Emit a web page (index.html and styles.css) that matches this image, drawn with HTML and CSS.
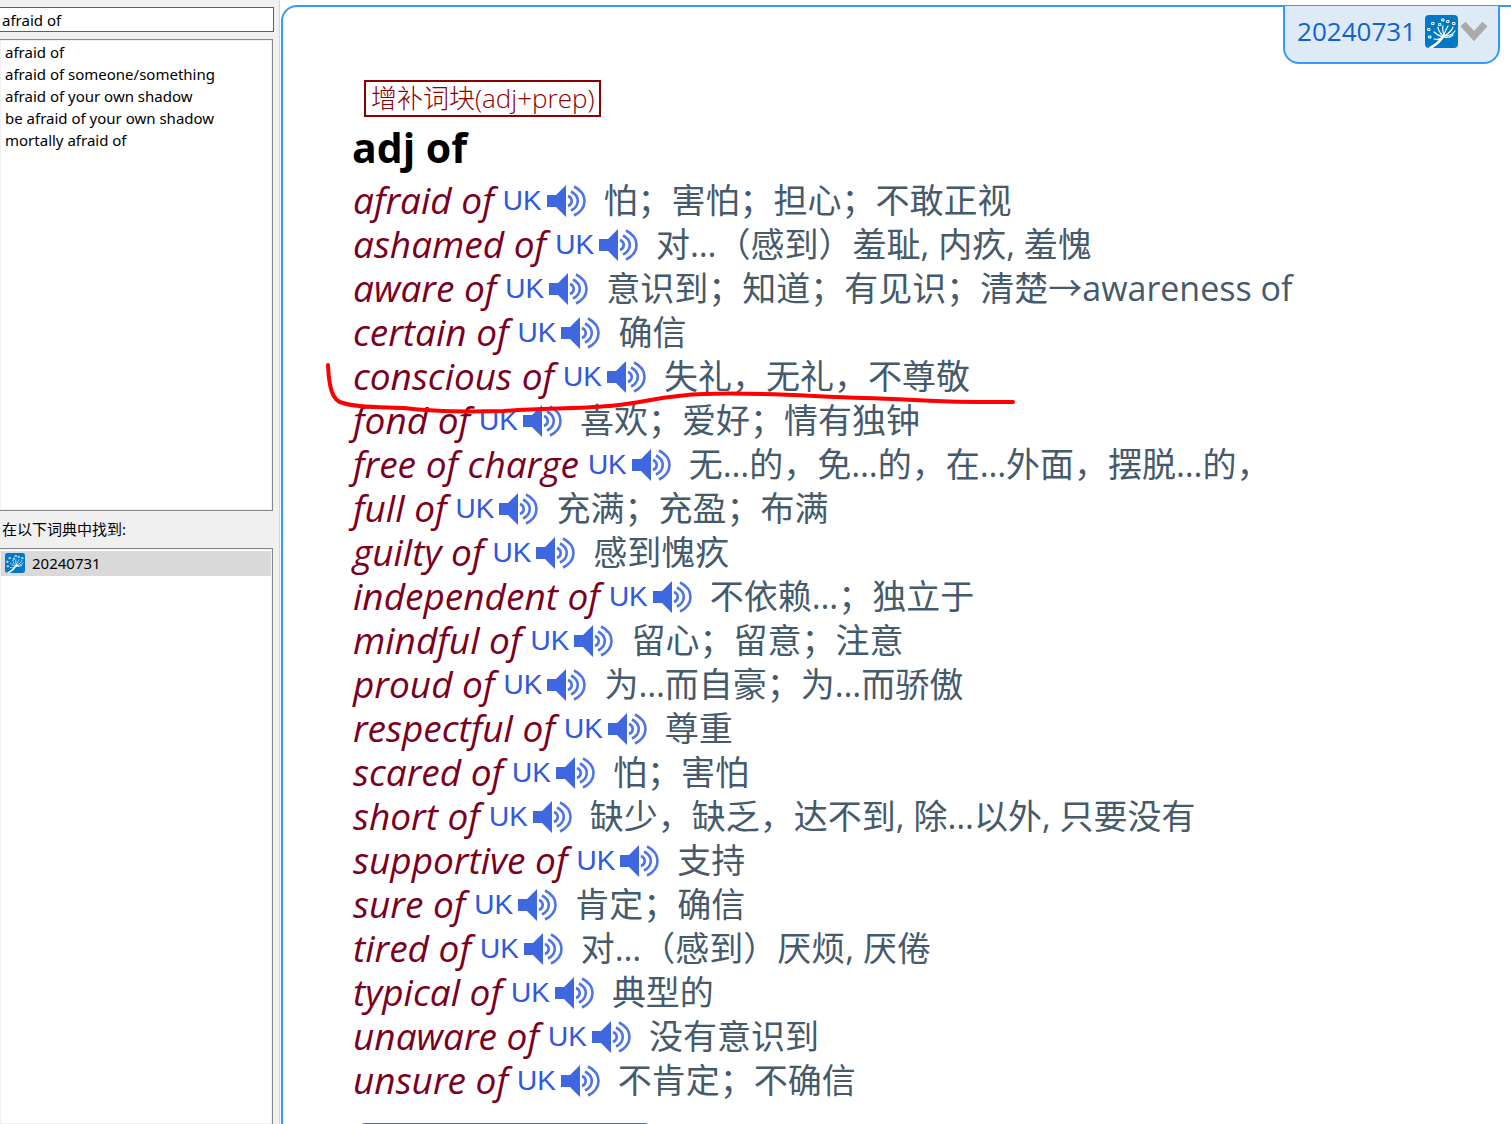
FILE: index.html
```html
<!DOCTYPE html>
<html lang="zh-CN">
<head>
  <meta charset="UTF-8" />
  <meta name="viewport" content="width=device-width, initial-scale=1.0" />
  <title>afraid of</title>
  <link rel="stylesheet" href="styles.css">
</head>
<body>
  <!-- shared icons -->
  <svg class="defs" width="0" height="0" aria-hidden="true">
    <symbol id="speaker" viewBox="0 0 40 34">
      <path d="M0 11h9L19 1v32L9 23H0z" fill="#3f68e0"/>
      <g fill="none" stroke="#4f75e4" stroke-width="2.600">
        <path d="M21 12c5 2 5 8 0 10"/>
        <path d="M24 7.500c9 4.500 9 14.500 0 19"/>
        <path d="M27 2.500c14 7 14 22 0 29"/>
      </g>
    </symbol>
    <symbol id="dict" viewBox="0 0 33 33">
      <rect width="33" height="33" rx="4" fill="#0078c4"/>
      <g fill="none" stroke="#fff" stroke-linecap="round">
        <path d="M5 33c6-3 11-8 14-13" stroke-width="2.500"/>
        <path d="M18 22c-4 3-6 3-9 2M18 22c-4-1-7-3-9-5M18 21c-3-3-5-6-5-9M19 20c-1-3-2-6-1-9M19 20c1-4 3-7 4-9M19 21c4-2 8-6 9-9M19 21c5 0 9-2 11-5M18 22c5 1 8 0 10-2" stroke-width="1.200"/>
        <path d="M7 7.500h2v2H7zM17 4h2v2h-2zM3 13.500h2v2H3zM4 21h2v2H4zM14 8.500h2v2h-2zM22 5.500h2v2h-2zM28 7.500h2v2h-2z" stroke-width="1"/>
      </g>
    </symbol>
  </svg>

  <div class="app">
    <aside class="sidebar">
      <input class="search" type="text" value="afraid of" aria-label="查询" autofocus>
      <ul class="panel matches">
        <li>afraid of</li>
        <li>afraid of someone/something</li>
        <li>afraid of your own shadow</li>
        <li>be afraid of your own shadow</li>
        <li>mortally afraid of</li>
      </ul>
      <h2 class="found">在以下词典中找到:</h2>
      <ul class="panel dicts">
        <li class="selected"><svg class="dict-small"><use href="#dict"/></svg>20240731</li>
      </ul>
    </aside>

    <main class="article">
      <button class="dict-tab" type="button">
        <span>20240731</span>
        <svg class="dict-big"><use href="#dict"/></svg>
        <svg class="chevron" viewBox="0 0 28 20"><path d="M3 3l11 12L25 3" fill="none" stroke="#aaa" stroke-width="7"/></svg>
      </button>

      <div class="tag">增补词块(adj+prep)</div>
      <h1>adj of</h1>
      <ul class="entries">
        <li><i>afraid of</i><button class="uk" type="button">UK<svg><use href="#speaker"/></svg></button><span>怕；害怕；担心；不敢正视</span></li>
        <li><i>ashamed of</i><button class="uk" type="button">UK<svg><use href="#speaker"/></svg></button><span>对…（感到）羞耻, 内疚, 羞愧</span></li>
        <li><i>aware of</i><button class="uk" type="button">UK<svg><use href="#speaker"/></svg></button><span>意识到；知道；有见识；清楚→awareness of</span></li>
        <li><i>certain of</i><button class="uk" type="button">UK<svg><use href="#speaker"/></svg></button><span>确信</span></li>
        <li class="marked"><i>conscious of</i><button class="uk" type="button">UK<svg><use href="#speaker"/></svg></button><span>失礼，无礼，不尊敬</span>
          <svg class="pen" viewBox="0 0 692 56"><path d="M4 6C5 28 8 42 19 44C34 49 60 48 80 49C110 53 140 53 180 52C220 49 250 50 285 47C320 44 340 36 380 35C430 33 480 37 540 39C590 40 620 44 689 43"/></svg>
        </li>
        <li><i>fond of</i><button class="uk" type="button">UK<svg><use href="#speaker"/></svg></button><span>喜欢；爱好；情有独钟</span></li>
        <li><i>free of charge</i><button class="uk" type="button">UK<svg><use href="#speaker"/></svg></button><span>无…的，免…的，在…外面，摆脱…的，</span></li>
        <li><i>full of</i><button class="uk" type="button">UK<svg><use href="#speaker"/></svg></button><span>充满；充盈；布满</span></li>
        <li><i>guilty of</i><button class="uk" type="button">UK<svg><use href="#speaker"/></svg></button><span>感到愧疚</span></li>
        <li><i>independent of</i><button class="uk" type="button">UK<svg><use href="#speaker"/></svg></button><span>不依赖…；独立于</span></li>
        <li><i>mindful of</i><button class="uk" type="button">UK<svg><use href="#speaker"/></svg></button><span>留心；留意；注意</span></li>
        <li><i>proud of</i><button class="uk" type="button">UK<svg><use href="#speaker"/></svg></button><span>为…而自豪；为…而骄傲</span></li>
        <li><i>respectful of</i><button class="uk" type="button">UK<svg><use href="#speaker"/></svg></button><span>尊重</span></li>
        <li><i>scared of</i><button class="uk" type="button">UK<svg><use href="#speaker"/></svg></button><span>怕；害怕</span></li>
        <li><i>short of</i><button class="uk" type="button">UK<svg><use href="#speaker"/></svg></button><span>缺少，缺乏，达不到, 除…以外, 只要没有</span></li>
        <li><i>supportive of</i><button class="uk" type="button">UK<svg><use href="#speaker"/></svg></button><span>支持</span></li>
        <li><i>sure of</i><button class="uk" type="button">UK<svg><use href="#speaker"/></svg></button><span>肯定；确信</span></li>
        <li><i>tired of</i><button class="uk" type="button">UK<svg><use href="#speaker"/></svg></button><span>对…（感到）厌烦, 厌倦</span></li>
        <li><i>typical of</i><button class="uk" type="button">UK<svg><use href="#speaker"/></svg></button><span>典型的</span></li>
        <li><i>unaware of</i><button class="uk" type="button">UK<svg><use href="#speaker"/></svg></button><span>没有意识到</span></li>
        <li><i>unsure of</i><button class="uk" type="button">UK<svg><use href="#speaker"/></svg></button><span>不肯定；不确信</span></li>
      </ul>
      <div class="next-box"></div>
    </main>
  </div>
</body>
</html>
```
FILE: styles.css
```css
* {
  box-sizing: border-box;
}
body {
  margin: 0;
  font-family: "Open Sans", "Noto Sans CJK SC", sans-serif;
  background: #fff;
  color: #000;
}
ul {
  list-style: none;
  margin: 0;
  padding: 0;
}
button {
  font: inherit;
  border: none;
  background: none;
  padding: 0;
  cursor: pointer;
}
.defs {
  position: absolute;
}
.app {
  display: flex;
  height: 100vh;
  overflow: hidden;
}

/* left column */
.sidebar {
  display: flex;
  flex-direction: column;
  flex: none;
  width: 280px;
  padding: 7px 5px 0 0;
  background: #f0f0f0;
  border-right: 1px solid #d4d4d4;
  font-family: "Noto Sans", "Noto Sans CJK SC", sans-serif;
  font-size: 15px;
}
.search {
  height: 25px;
  padding: 0 2px;
  border: 1px solid #0078d7;
  border-left: none;
  background: #fff;
  color: #000;
  font: inherit;
  outline: none;
}
.panel {
  margin-right: 1px;
  border: 1px solid #828790;
  border-left: none;
  background: #fff;
  box-shadow: inset 0 0 0 1px #f0f0f0;
}
.matches {
  height: 42vh;
  margin-top: 7px;
  padding: 1px 0 0 5px;
}
.matches li {
  line-height: 22px;
}
.found {
  margin: 0;
  padding-left: 2px;
  font-size: 15px;
  font-weight: normal;
  line-height: 37px;
}
.dicts {
  flex: 1;
  padding: 2px 1px;
  border-bottom: none;
}
.dicts .selected {
  display: flex;
  align-items: center;
  gap: 7px;
  height: 25px;
  padding: 0 0 2px 4px;
  background: #d9d9d9;
}
.dict-small {
  width: 20px;
  height: 20px;
}

/* article */
.article {
  position: relative;
  flex: 1;
  min-width: 0;
  margin: 5px 0 0 1px;
  padding: 73px 0 0 69px;
  border: 2px solid #39f;
  border-right: none;
  border-bottom: none;
  border-top-left-radius: 16px;
}
.dict-tab {
  position: absolute;
  top: -1px;
  right: 11px;
  display: flex;
  align-items: center;
  height: 58px;
  padding: 0 10px 6px 12px;
  border: 2px solid #39f;
  border-top: none;
  border-radius: 0 0 16px 16px;
  background: #deebf7;
  color: #0f62d0;
  font-size: 26px;
}
.dict-big {
  width: 33px;
  height: 33px;
  margin-left: 9px;
}
.chevron {
  width: 28px;
  height: 20px;
  margin-left: 2px;
}
.tag {
  width: fit-content;
  margin-left: 12px;
  padding: 0 5px;
  border: 2px solid #8b0000;
  color: #8b0000;
  font-size: 26px;
  font-weight: 300;
  line-height: 33px;
}
h1 {
  margin: 0 0 1px;
  font-size: 41px;
  line-height: 60px;
}
.entries {
  color: #455a6b;
  font-size: 34px;
  line-height: 44px;
}
.entries li {
  display: flex;
  align-items: center;
  height: 44px;
  padding-left: 1px;
  white-space: nowrap;
}
.entries i {
  color: #7b0020;
  font-size: 37px;
}
.uk {
  display: flex;
  align-items: center;
  margin: 0 17px 0 9px;
  padding-top: 2px;
  color: #3058e0;
  font-family: "Liberation Sans", sans-serif;
  font-size: 28px;
}
.uk svg {
  width: 40px;
  height: 34px;
  margin-left: 5px;
}
.marked {
  position: relative;
}
/* red pen stroke over the line */
.pen {
  position: absolute;
  top: 5px;
  left: -28px;
  width: 692px;
  height: 56px;
  fill: none;
  stroke: #f00;
  stroke-width: 4;
  stroke-linecap: round;
  pointer-events: none;
}
.next-box {
  width: 288px;
  height: 44px;
  margin: 21px 0 0 9px;
  border: 2px solid #4472b8;
  border-radius: 4px;
}
```
